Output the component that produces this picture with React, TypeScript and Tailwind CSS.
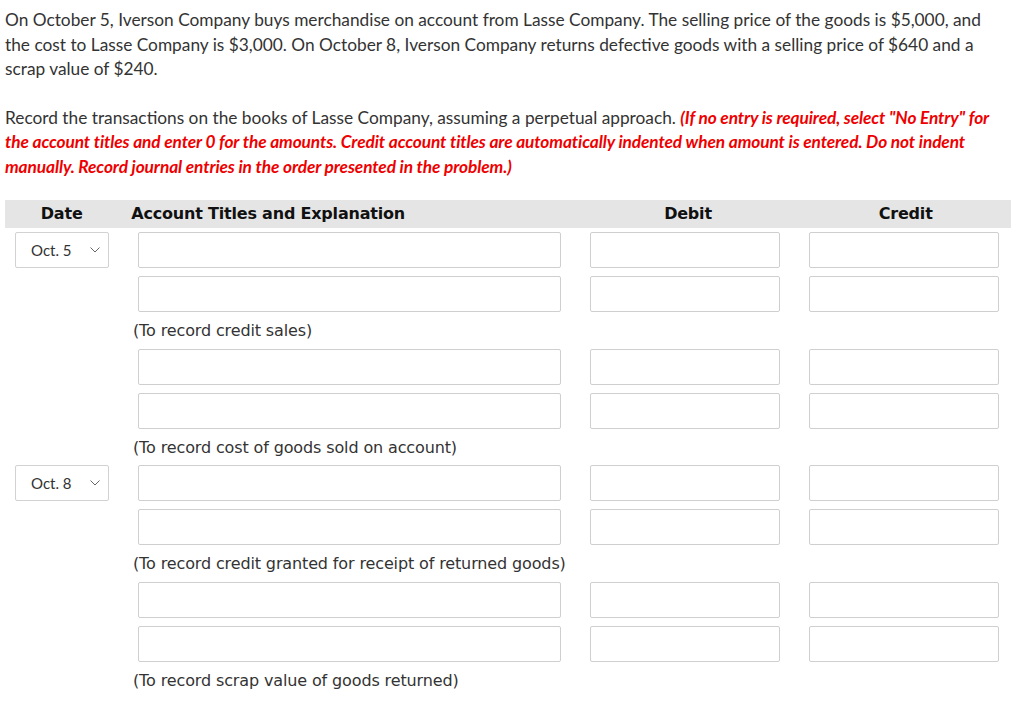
import React from 'react';

interface EntryGroup {
  date?: string;
  note: string;
}

const groups: EntryGroup[] = [
  { date: 'Oct. 5', note: '(To record credit sales)' },
  { note: '(To record cost of goods sold on account)' },
  { date: 'Oct. 8', note: '(To record credit granted for receipt of returned goods)' },
  { note: '(To record scrap value of goods returned)' },
];

const Chevron = () => (
  <svg width="10" height="6" viewBox="0 0 10 6" fill="none" xmlns="http://www.w3.org/2000/svg">
    <path d="M0.5 0.5L5 5L9.5 0.5" stroke="#666" strokeWidth="1" />
  </svg>
);

const Box = ({ w }: { w: string }) => (
  <div className={`${w} h-[36px] border border-[#cfcfcf] rounded-[2px] bg-white`} />
);

const EntryRow = ({ date }: { date?: string }) => (
  <div className="flex items-start pl-[15px]">
    <div className="w-[94px]">
      {date && (
        <div className="h-[36px] border border-[#d2d2d2] rounded-[2px] flex items-center justify-between pl-[15px] pr-[8px] text-[15px] text-[#333]">
          <span>{date}</span>
          <Chevron />
        </div>
      )}
    </div>
    <div className="ml-[29px]">
      <Box w="w-[423px]" />
    </div>
    <div className="ml-[29px]">
      <Box w="w-[190px]" />
    </div>
    <div className="ml-[29px]">
      <Box w="w-[190px]" />
    </div>
  </div>
);

export default function App() {
  return (
    <div className="bg-white min-h-[715px] w-[1024px] pt-[8px] text-[17.3px] leading-[24.5px] text-[#333]" style={{ fontFamily: 'Lato, "Liberation Sans", sans-serif' }}>
      <p className="px-[5px] whitespace-nowrap">
        On October 5, Iverson Company buys merchandise on account from Lasse Company. The selling price of the goods is $5,000, and
        <br />
        the cost to Lasse Company is $3,000. On October 8, Iverson Company returns defective goods with a selling price of $640 and a
        <br />
        scrap value of $240.
      </p>
      <p className="px-[5px] mt-[24px] whitespace-nowrap">
        Record the transactions on the books of Lasse Company, assuming a perpetual approach.{' '}
        <span className="text-[#ee0000] font-bold italic tracking-[-0.1px]">
          (If no entry is required, select "No Entry" for
          <br />
          the account titles and enter 0 for the amounts. Credit account titles are automatically indented when amount is entered. Do not indent
          <br />
          manually. Record journal entries in the order presented in the problem.)
        </span>
      </p>

      <div className="mt-[21px] ml-[5px] w-[1006px] h-[28px] bg-[#e5e5e5] flex items-center font-bold text-[16px] text-[#111]" style={{ fontFamily: '"DejaVu Sans", Verdana, sans-serif' }}>
        <div className="w-[114px] text-center tracking-[-0.2px]">Date</div>
        <div className="ml-[13px] w-[420px] tracking-[-0.2px]">Account Titles and Explanation</div>
        <div className="ml-[34px] w-[212px] text-center tracking-[-0.2px]">Debit</div>
        <div className="ml-[7px] w-[212px] text-center tracking-[-0.2px]">Credit</div>
      </div>

      <div className="mt-[4px]">
        {groups.map((g, i) => (
          <div key={i}>
            <EntryRow date={g.date} />
            <div className="h-[8px]" />
            <EntryRow />
            <div className="h-[36.7px] pl-[133px] pt-[7px] text-[16px] text-[#333] tracking-[-0.13px]" style={{ fontFamily: '"DejaVu Sans", Verdana, sans-serif' }}>
              {g.note}
            </div>
          </div>
        ))}
      </div>
    </div>
  );
}
